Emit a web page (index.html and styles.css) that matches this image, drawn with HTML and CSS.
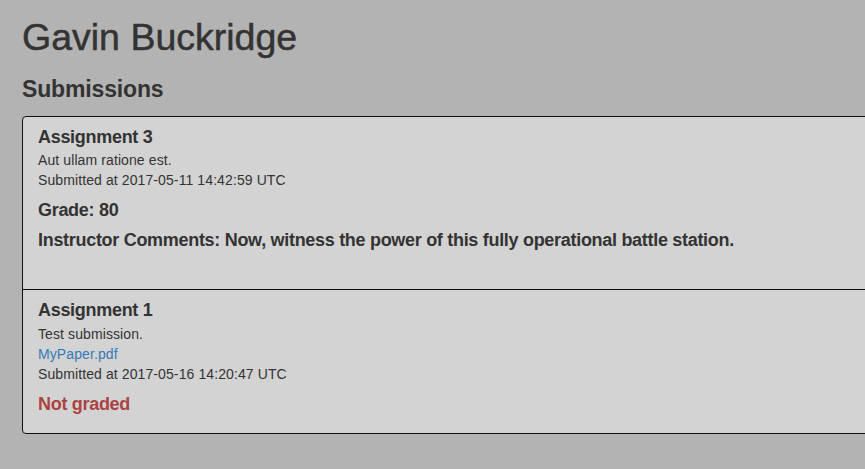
FILE: index.html
```html
<!DOCTYPE html>
<html lang="en">
<head>
<meta charset="utf-8">
<title>Gavin Buckridge</title>
<link rel="stylesheet" href="styles.css">
</head>
<body>
<div class="container">
  <h1 class="name">Gavin Buckridge</h1>
  <h3 class="section-title">Submissions</h3>
  <div class="submissions">
    <div class="item">
      <h4 class="title">Assignment 3</h4>
      <div class="meta">Aut ullam ratione est.</div>
      <div class="meta">Submitted at 2017-05-11 14:42:59 UTC</div>
      <h4 class="grade">Grade: 80</h4>
      <h4 class="comments">Instructor Comments: Now, witness the power of this fully operational battle station.</h4>
    </div>
    <div class="item">
      <h4 class="title">Assignment 1</h4>
      <div class="meta">Test submission.</div>
      <div class="meta"><a href="#" class="file">MyPaper.pdf</a></div>
      <div class="meta">Submitted at 2017-05-16 14:20:47 UTC</div>
      <h4 class="grade not-graded">Not graded</h4>
    </div>
  </div>
</div>
</body>
</html>
```
FILE: styles.css
```css
html, body {
  margin: 0;
  padding: 0;
  overflow: hidden;
}
body {
  background: #b3b3b3;
  color: #333;
  font-family: "Liberation Sans", Arial, Helvetica, sans-serif;
  font-size: 14px;
  line-height: 20px;
  height: 469px;
}
.container {
  width: 1170px;
  padding: 0 0 0 22px;
}
.name {
  font-size: 37.5px;
  font-weight: normal;
  line-height: 1.1;
  margin: 17px 0 0;
  -webkit-text-stroke: 0.5px #333;
}
.section-title {
  font-size: 23px;
  font-weight: bold;
  line-height: 26.4px;
  letter-spacing: -0.15px;
  margin: 18px 0 13px;
}
.submissions {
  background: #d3d3d3;
  border: 1px solid #111;
  border-radius: 4px;
}
.item {
  padding: 11px 15px 10px;
}
.item + .item {
  border-top: 1px solid #111;
}
h4 {
  font-size: 18px;
  font-weight: bold;
  line-height: 1.1;
  letter-spacing: -0.3px;
}
.title {
  margin: 0 0 3px;
}
.meta {
  font-size: 14px;
  line-height: 20px;
  letter-spacing: 0.1px;
}
.file {
  color: #337ab7;
  text-decoration: none;
}
.grade {
  margin: 11px 0 10px;
}
.comments {
  margin: 0 0 28px;
}
.not-graded {
  color: #a94442;
  margin-bottom: 8px;
}
```
